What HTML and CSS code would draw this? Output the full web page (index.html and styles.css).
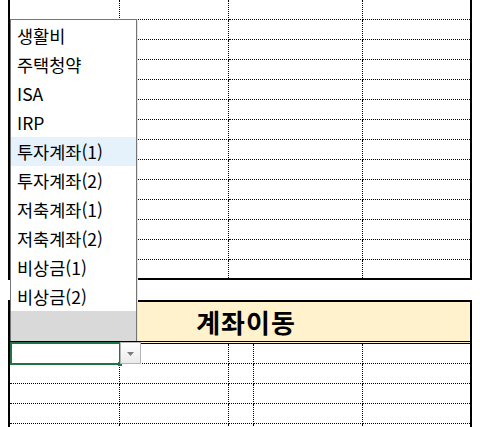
FILE: index.html
```html
<!DOCTYPE html>
<html lang="ko">
<head>
<meta charset="utf-8">
<title>계좌이동</title>
<link rel="stylesheet" href="styles.css">
</head>
<body>
<div class="sheet">
  <div class="block top">
    <div class="row"><span></span><span></span><span></span><span></span></div>
    <div class="row"><span></span><span></span><span></span><span></span></div>
    <div class="row"><span></span><span></span><span></span><span></span></div>
    <div class="row"><span></span><span></span><span></span><span></span></div>
    <div class="row"><span></span><span></span><span></span><span></span></div>
    <div class="row"><span></span><span></span><span></span><span></span></div>
    <div class="row"><span></span><span></span><span></span><span></span></div>
    <div class="row"><span></span><span></span><span></span><span></span></div>
    <div class="row"><span></span><span></span><span></span><span></span></div>
    <div class="row"><span></span><span></span><span></span><span></span></div>
    <div class="row"><span></span><span></span><span></span><span></span></div>
    <div class="row"><span></span><span></span><span></span><span></span></div>
    <div class="row"><span></span><span></span><span></span><span></span></div>
    <div class="row"><span></span><span></span><span></span><span></span></div>
  </div>
  <div class="gap"></div>
  <div class="block bottom">
    <div class="header">계좌이동</div>
    <div class="row five"><span></span><span></span><span></span><span></span><span></span></div>
    <div class="row five"><span></span><span></span><span></span><span></span><span></span></div>
    <div class="row five"><span></span><span></span><span></span><span></span><span></span></div>
    <div class="row five"><span></span><span></span><span></span><span></span><span></span></div>
    <div class="row five"><span></span><span></span><span></span><span></span><span></span></div>
  </div>

  <div class="dropdown">
    <ul class="options">
      <li>생활비</li>
      <li>주택청약</li>
      <li>ISA</li>
      <li>IRP</li>
      <li class="hover">투자계좌(1)</li>
      <li>투자계좌(2)</li>
      <li>저축계좌(1)</li>
      <li>저축계좌(2)</li>
      <li>비상금(1)</li>
      <li>비상금(2)</li>
    </ul>
    <div class="dd-footer"></div>
  </div>

  <div class="active-cell"><span class="handle"></span></div>
  <div class="dd-button">
    <svg width="7" height="4" viewBox="0 0 7 4"><polygon points="0,0 7,0 3.5,4" fill="#7a7a7a"/></svg>
  </div>
</div>
</body>
</html>
```

FILE: styles.css
```css
html, body {
  margin: 0;
  padding: 0;
}
body {
  width: 480px;
  height: 427px;
  overflow: hidden;
  background: #ffffff;
  font-family: "Noto Sans CJK KR", "Noto Sans", sans-serif;
  color: #000;
}
.sheet {
  position: relative;
  padding-left: 8px;
}
.block {
  width: 460px;
  border-left: 2px solid #000;
  border-right: 2px solid #000;
}
.top {
  border-bottom: 2px solid #000;
}
.row {
  display: grid;
  grid-template-columns: 110px 109px 134px 107px;
  height: 20px;
}
.row > span {
  box-sizing: border-box;
  border-right: 1px dotted #000;
  border-bottom: 1px dotted #000;
}
.row > span:last-child {
  border-right: 0;
}
.top .row:last-child {
  height: 18px;
}
.top .row:last-child > span {
  border-bottom: 0;
}
.gap {
  height: 20px;
}
.bottom {
  border-top: 2px solid #000;
}
.header {
  height: 39px;
  line-height: 39px;
  background: #fff2cc;
  border-bottom: 3px double #000;
  text-align: center;
  font-weight: 700;
  font-size: 26px;
  letter-spacing: 1px;
  padding-left: 12px;
}
.row.five {
  grid-template-columns: 110px 109px 25px 109px 107px;
}

/* dropdown list overlay */
.dropdown {
  position: absolute;
  left: 10px;
  top: 19px;
  width: 127px;
  height: 322px;
  box-sizing: border-box;
  border: 1px solid #767676;
  border-bottom: 0;
  background: #fff;
  box-shadow: 1px 0 0 #dfe5ef;
  display: flex;
  flex-direction: column;
}
.options {
  list-style: none;
  margin: 0;
  padding: 1px 0 0 0;
}
.options li {
  height: 29px;
  line-height: 30px;
  padding-left: 6px;
  font-size: 17.5px;
  white-space: nowrap;
}
.options li.hover {
  background: #e5f1fb;
}
.dd-footer {
  flex: 1;
  background: #d9d9d9;
}

/* active cell + dropdown button */
.active-cell {
  position: absolute;
  left: 10px;
  top: 342px;
  width: 111px;
  height: 23px;
  box-sizing: border-box;
  border: 2px solid #217346;
}
.handle {
  position: absolute;
  left: 106px;
  top: 18px;
  width: 4px;
  height: 4px;
  background: #217346;
}
.dd-button {
  position: absolute;
  left: 120px;
  top: 342px;
  width: 21px;
  height: 22px;
  box-sizing: border-box;
  border: 1px solid #b4b4b4;
  background: linear-gradient(#fdfdfd, #ececec);
  display: flex;
  align-items: center;
  justify-content: center;
}
.dd-button svg {
  display: block;
  margin-top: 1px;
}
```
